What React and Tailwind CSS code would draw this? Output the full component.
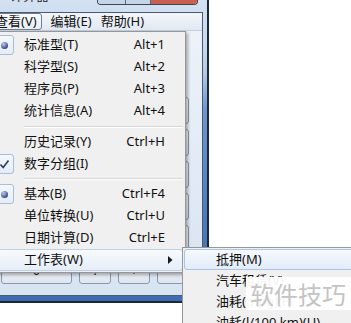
import React from 'react'

const font = "font-['Noto_Sans','Noto_Sans_CJK_SC',sans-serif]"

const mainItems = [
  { label: '标准型(T)', keys: 'Alt+1', mark: 'dot' },
  { label: '科学型(S)', keys: 'Alt+2' },
  { label: '程序员(P)', keys: 'Alt+3' },
  { label: '统计信息(A)', keys: 'Alt+4' },
  { sep: 'h-[9px]' },
  { label: '历史记录(Y)', keys: 'Ctrl+H' },
  { label: '数字分组(I)', mark: 'check' },
  { sep: 'h-[8px]' },
  { label: '基本(B)', keys: 'Ctrl+F4', mark: 'dot' },
  { label: '单位转换(U)', keys: 'Ctrl+U' },
  { label: '日期计算(D)', keys: 'Ctrl+E' },
  { label: '工作表(W)', sub: true, hover: true },
]

const subItems = ['抵押(M)', '汽车租赁(V)', '油耗(mpg)(F)', '油耗(l/100 km)(U)']

// only the bottom row peeks out from under the menu, the rest stay unlabeled
const keys = [
  'k1', 'k2', 'k3', 'k4', 'k5',
  'k6', 'k7', 'k8', 'k9', 'k10',
  'k11', 'k12', 'k13', 'k14', 'k15',
  'k16', 'k17', 'k18', 'k19', 'k20',
  'k21', 'k22', 'k23', 'k24', '=',
  '0', '.', '+',
]

function Mark({ type }) {
  if (!type) return <div className="w-[20px] h-[20px] shrink-0" />
  return (
    <div className="w-[20px] h-[20px] shrink-0 rounded-[3px] border border-[#a8bdd6] bg-[linear-gradient(to_bottom,#f4f8fc,#e4edf7)] flex items-center justify-end pr-[5px]">
      {type === 'dot' ? (
        <div className="w-[7px] h-[7px] rounded-full bg-[radial-gradient(circle_at_35%_30%,#c3cbe6,#3c4c8a_70%,#26336a)]" />
      ) : (
        <svg width="11" height="11" viewBox="0 0 11 11" className="mr-[-2px]">
          <path d="M1.5 5.5 L4.2 8.5 L9.5 1.5" fill="none" stroke="#2a3b62" strokeWidth="1.6" />
        </svg>
      )}
    </div>
  )
}

function Key({ id }) {
  const span = id === '0' ? 'col-span-2' : id === '=' ? 'row-span-2' : ''
  const label = ['0', '.', '+'].includes(id) ? id : ''
  return (
    <div className={`${span} rounded-[3px] border border-[#8a98ab] bg-[linear-gradient(to_bottom,#f6f8fb,#dfe6ef)] flex items-center justify-center text-[12px] text-[#1a1a1a]`}>
      {label}
    </div>
  )
}

export default function App() {
  return (
    <div className={`relative w-[351px] h-[323px] overflow-hidden bg-white text-[13px] text-[#111] ${font}`}>
      {/* calculator window */}
      <div className="absolute left-[-12px] top-0 w-[221px] h-[303px] flex flex-col pr-[4px] pb-[5px] border-r-2 border-b-2 border-[#1c2736] bg-[linear-gradient(to_bottom,#d3e1f1_0%,#c9dbef_14%,#b4cbe8_24%,#6f97cf_36%,#4d7cbf_70%,#3d6cb1_100%)]">
        {/* title strip */}
        <div className="h-[12px] flex justify-between overflow-hidden shrink-0">
          <div className="ml-[22px] mt-[-13px] text-[13px] text-[#2a2a2a] leading-[16px]">计算器</div>
          <div className="flex h-[5px] mr-[5px] rounded-b-[4px] border border-t-0 border-[#3c4656] overflow-hidden">
            <div className="w-[28px] bg-[#c5d4e6] border-r border-[#5b6677]" />
            <div className="w-[25px] bg-[#c5d4e6] border-r border-[#5b6677]" />
            <div className="w-[46px] bg-[#c9604f]" />
          </div>
        </div>

        {/* client area */}
        <div className="flex-1 flex flex-col border border-[#4a5a70] bg-[linear-gradient(to_bottom,#eef3f9,#d8e4f2)]">
          <div className="h-[18px] flex items-center shrink-0 bg-[linear-gradient(to_bottom,#f3f6fa,#e1e9f3)] border-b border-[#c2cedc]">
            <div className="ml-[1px] h-[17px] px-[4px] flex items-center rounded-[3px] border border-[#6f7d8e] bg-[linear-gradient(to_bottom,#fafcfe,#e8eef6)]">查看(V)</div>
            <div className="ml-[4px] px-[5px]">编辑(E)</div>
            <div className="px-[4px]">帮助(H)</div>
          </div>
          <div className="flex-1 flex flex-col justify-end pl-[12px] pb-[11px]">
            <div className="grid grid-cols-[repeat(5,32px)] auto-rows-[27px] gap-x-[7px] gap-y-[5px]">
              {keys.map(k => <Key key={k} id={k} />)}
            </div>
          </div>
        </div>
      </div>

      {/* 查看 dropdown */}
      <div className="absolute left-[-10px] top-[31px] w-[196px] h-[242px] border border-[#979797] bg-[#f0f0f0] pt-[2px] px-[2px] shadow-[2px_2px_3px_rgba(0,0,0,0.3)] flex flex-col">
        {mainItems.map((it, i) =>
          it.sep ? (
            <div key={i} className={`${it.sep} flex items-center pl-[31px]`}>
              <div className="flex-1 h-[2px] border-t border-[#d7d7d7] border-b border-b-white" />
            </div>
          ) : (
            <div
              key={i}
              className={`h-[22px] flex items-center shrink-0 rounded-[3px] ${it.hover ? 'border border-[#bcd0e8] bg-[linear-gradient(to_bottom,#f8fbfe,#e5edf7)]' : 'border border-transparent'}`}
            >
              <Mark type={it.mark} />
              <span className="ml-[10px] flex-1 whitespace-nowrap">{it.label}</span>
              {it.keys && <span className="mr-[17px] whitespace-nowrap">{it.keys}</span>}
              {it.sub && (
                <svg width="5" height="8" viewBox="0 0 5 8" className="mr-[9px]">
                  <path d="M0 0 L4.5 4 L0 8 Z" fill="#1a1a1a" />
                </svg>
              )}
            </div>
          )
        )}
      </div>

      {/* 工作表 submenu */}
      <div className="absolute left-[182px] top-[247px] w-[190px] h-[100px] border border-[#979797] bg-[#f0f0f0] pt-[1px] px-[1px] flex flex-col">
        {subItems.map((s, i) => (
          <div
            key={s}
            className={`h-[21px] flex items-center shrink-0 pl-[31px] whitespace-nowrap rounded-[3px] ${i === 0 ? 'border border-[#a9c4e6] bg-[linear-gradient(to_bottom,#f6f9fd,#e2ecf8)]' : 'border border-transparent'}`}
          >
            {s}
          </div>
        ))}
      </div>

      {/* watermark */}
      <div className="absolute left-[246px] top-[277px] w-[110px] h-[33px] bg-white/95 flex items-center pl-[4px] text-[24px] text-[#c4c4c4] font-['Noto_Sans_CJK_SC',sans-serif] whitespace-nowrap">
        软件技巧
      </div>
    </div>
  )
}
